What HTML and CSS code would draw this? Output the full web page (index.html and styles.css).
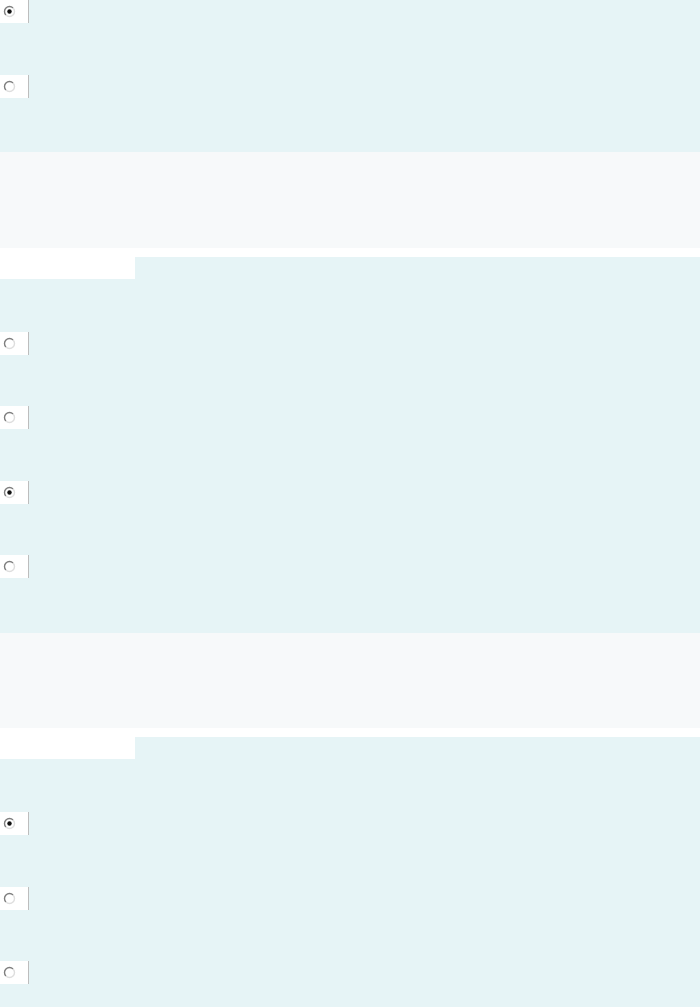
FILE: index.html
```html
<!DOCTYPE html>
<html lang="en">
<head>
    <meta charset="UTF-8">
    <meta name="viewport" content="width=device-width, initial-scale=1.0">
    <title>Quiz</title>
    <link rel="stylesheet" href="styles.css">
</head>
<body>
    <div class="quiz">
        <!-- question 1 (scrolled, header off screen) -->
        <div class="question first">
            <div class="option">
                <span class="answer-box">
                    <svg class="radio" width="13" height="13" viewBox="0 0 13 13">
                        <path d="M2.96 10.04 A5 5 0 0 1 10.04 2.96" fill="none" stroke="#7e7e7e" stroke-width="1.4"/>
                        <path d="M10.04 2.96 A5 5 0 0 1 2.96 10.04" fill="none" stroke="#dedede" stroke-width="1.4"/>
                        <circle cx="6.5" cy="6.5" r="2.2" fill="#111"/>
                    </svg>
                </span>
            </div>
            <div class="option">
                <span class="answer-box">
                    <svg class="radio" width="13" height="13" viewBox="0 0 13 13">
                        <path d="M2.96 10.04 A5 5 0 0 1 10.04 2.96" fill="none" stroke="#7e7e7e" stroke-width="1.4"/>
                        <path d="M10.04 2.96 A5 5 0 0 1 2.96 10.04" fill="none" stroke="#dedede" stroke-width="1.4"/>
                    </svg>
                </span>
            </div>
        </div>
        <div class="note"></div>

        <!-- question 2 -->
        <div class="question-head">
            <div class="head-strip"></div>
            <div class="head-tab"></div>
        </div>
        <div class="question">
            <div class="option">
                <span class="answer-box">
                    <svg class="radio" width="13" height="13" viewBox="0 0 13 13">
                        <path d="M2.96 10.04 A5 5 0 0 1 10.04 2.96" fill="none" stroke="#7e7e7e" stroke-width="1.4"/>
                        <path d="M10.04 2.96 A5 5 0 0 1 2.96 10.04" fill="none" stroke="#dedede" stroke-width="1.4"/>
                    </svg>
                </span>
            </div>
            <div class="option">
                <span class="answer-box">
                    <svg class="radio" width="13" height="13" viewBox="0 0 13 13">
                        <path d="M2.96 10.04 A5 5 0 0 1 10.04 2.96" fill="none" stroke="#7e7e7e" stroke-width="1.4"/>
                        <path d="M10.04 2.96 A5 5 0 0 1 2.96 10.04" fill="none" stroke="#dedede" stroke-width="1.4"/>
                    </svg>
                </span>
            </div>
            <div class="option">
                <span class="answer-box">
                    <svg class="radio" width="13" height="13" viewBox="0 0 13 13">
                        <path d="M2.96 10.04 A5 5 0 0 1 10.04 2.96" fill="none" stroke="#7e7e7e" stroke-width="1.4"/>
                        <path d="M10.04 2.96 A5 5 0 0 1 2.96 10.04" fill="none" stroke="#dedede" stroke-width="1.4"/>
                        <circle cx="6.5" cy="6.5" r="2.2" fill="#111"/>
                    </svg>
                </span>
            </div>
            <div class="option">
                <span class="answer-box">
                    <svg class="radio" width="13" height="13" viewBox="0 0 13 13">
                        <path d="M2.96 10.04 A5 5 0 0 1 10.04 2.96" fill="none" stroke="#7e7e7e" stroke-width="1.4"/>
                        <path d="M10.04 2.96 A5 5 0 0 1 2.96 10.04" fill="none" stroke="#dedede" stroke-width="1.4"/>
                    </svg>
                </span>
            </div>
        </div>
        <div class="note"></div>

        <!-- question 3 -->
        <div class="question-head">
            <div class="head-strip"></div>
            <div class="head-tab"></div>
        </div>
        <div class="question">
            <div class="option">
                <span class="answer-box">
                    <svg class="radio" width="13" height="13" viewBox="0 0 13 13">
                        <path d="M2.96 10.04 A5 5 0 0 1 10.04 2.96" fill="none" stroke="#7e7e7e" stroke-width="1.4"/>
                        <path d="M10.04 2.96 A5 5 0 0 1 2.96 10.04" fill="none" stroke="#dedede" stroke-width="1.4"/>
                        <circle cx="6.5" cy="6.5" r="2.2" fill="#111"/>
                    </svg>
                </span>
            </div>
            <div class="option">
                <span class="answer-box">
                    <svg class="radio" width="13" height="13" viewBox="0 0 13 13">
                        <path d="M2.96 10.04 A5 5 0 0 1 10.04 2.96" fill="none" stroke="#7e7e7e" stroke-width="1.4"/>
                        <path d="M10.04 2.96 A5 5 0 0 1 2.96 10.04" fill="none" stroke="#dedede" stroke-width="1.4"/>
                    </svg>
                </span>
            </div>
            <div class="option">
                <span class="answer-box">
                    <svg class="radio" width="13" height="13" viewBox="0 0 13 13">
                        <path d="M2.96 10.04 A5 5 0 0 1 10.04 2.96" fill="none" stroke="#7e7e7e" stroke-width="1.4"/>
                        <path d="M10.04 2.96 A5 5 0 0 1 2.96 10.04" fill="none" stroke="#dedede" stroke-width="1.4"/>
                    </svg>
                </span>
            </div>
        </div>
    </div>
</body>
</html>
```

FILE: styles.css
```css
body {
    margin: 0;
    font-family: "Liberation Sans", Arial, sans-serif;
    background-color: #e6f4f6;
    overflow: hidden;
}

.quiz {
    display: flex;
    flex-direction: column;
}

.question {
    padding: 27px 0 29px;
}

.question.first {
    margin-top: -53px;
}

.option {
    height: 74.5px;
    padding-top: 26px;
    box-sizing: border-box;
}

.answer-box {
    display: flex;
    align-items: center;
    width: 29px;
    height: 23px;
    padding-left: 3px;
    box-sizing: border-box;
    background: white;
    border-right: 1px solid #bdbdbd;
}

.radio {
    display: block;
}

.note {
    height: 95.5px;
    background-color: #f7f9fa;
}

.question-head {
    display: flex;
    flex-direction: column;
}

.head-strip {
    height: 9px;
    background: white;
}

.head-tab {
    width: 135px;
    height: 22px;
    background: white;
}
```
